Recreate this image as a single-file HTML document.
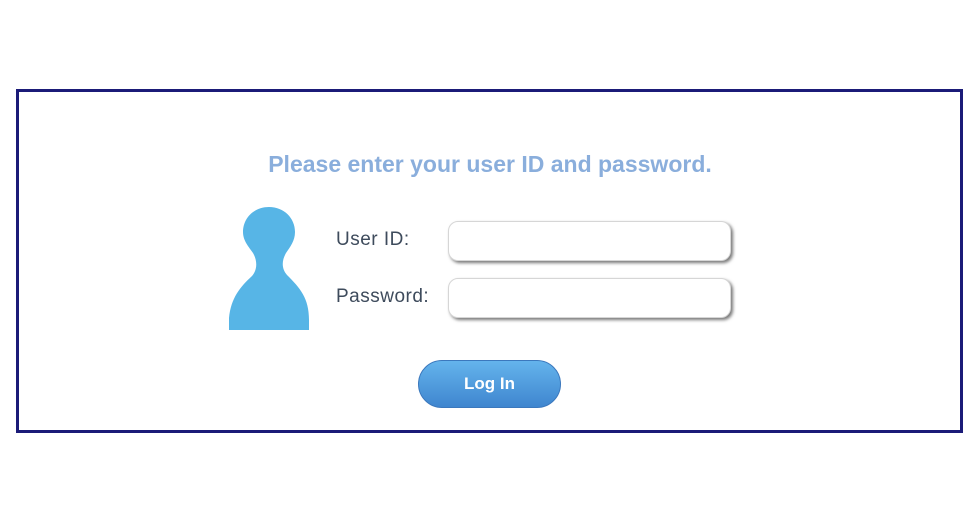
<!DOCTYPE html>
<html><head><style>
body{margin:0;width:975px;height:527px;background:#fff;position:relative;font-family:"Liberation Sans",sans-serif;overflow:hidden}
.box{position:absolute;left:16px;top:89px;width:941px;height:338px;border:3px solid #1b1b78}
.title{position:absolute;left:0;width:980px;top:151px;text-align:center;color:#8aaedc;font-weight:bold;font-size:23px;letter-spacing:0}
.lbl{position:absolute;left:336px;color:#3e4b5c;font-size:19px;letter-spacing:0.5px}
.inp{position:absolute;left:448px;width:281px;height:38px;border:1px solid #d6d6d6;border-radius:10px;background:#fff;box-shadow:2px 2px 3px #777}
.btn{position:absolute;left:418px;top:360px;width:141px;height:46px;border:1px solid #3b78bd;border-radius:24px;background:linear-gradient(#64b4ec,#3f86cf);color:#fff;font-weight:bold;font-size:17px;text-align:center;line-height:46px}
</style></head><body>
<div class="box"></div>
<div class="title">Please enter your user ID and password.</div>
<svg style="position:absolute;left:0;top:0" width="975" height="527">
<path fill="#57b5e6" d="M269 207 C284 207 295 218 295 232 C295 241 290 247 286 253 C282 260 281 268 287 275 C300 288 309 298 309 320 L309 330 L229 330 L229 318 C231 298 240 287 252 276 C258 269 257 260 253 253 C249 247 243 241 243 232 C243 218 254 207 269 207 Z"/>
</svg>
<div class="lbl" style="top:229px">User ID:</div>
<div class="lbl" style="top:286px">Password:</div>
<div class="inp" style="top:221px"></div>
<div class="inp" style="top:278px"></div>
<div class="btn">Log In</div>
</body></html>
